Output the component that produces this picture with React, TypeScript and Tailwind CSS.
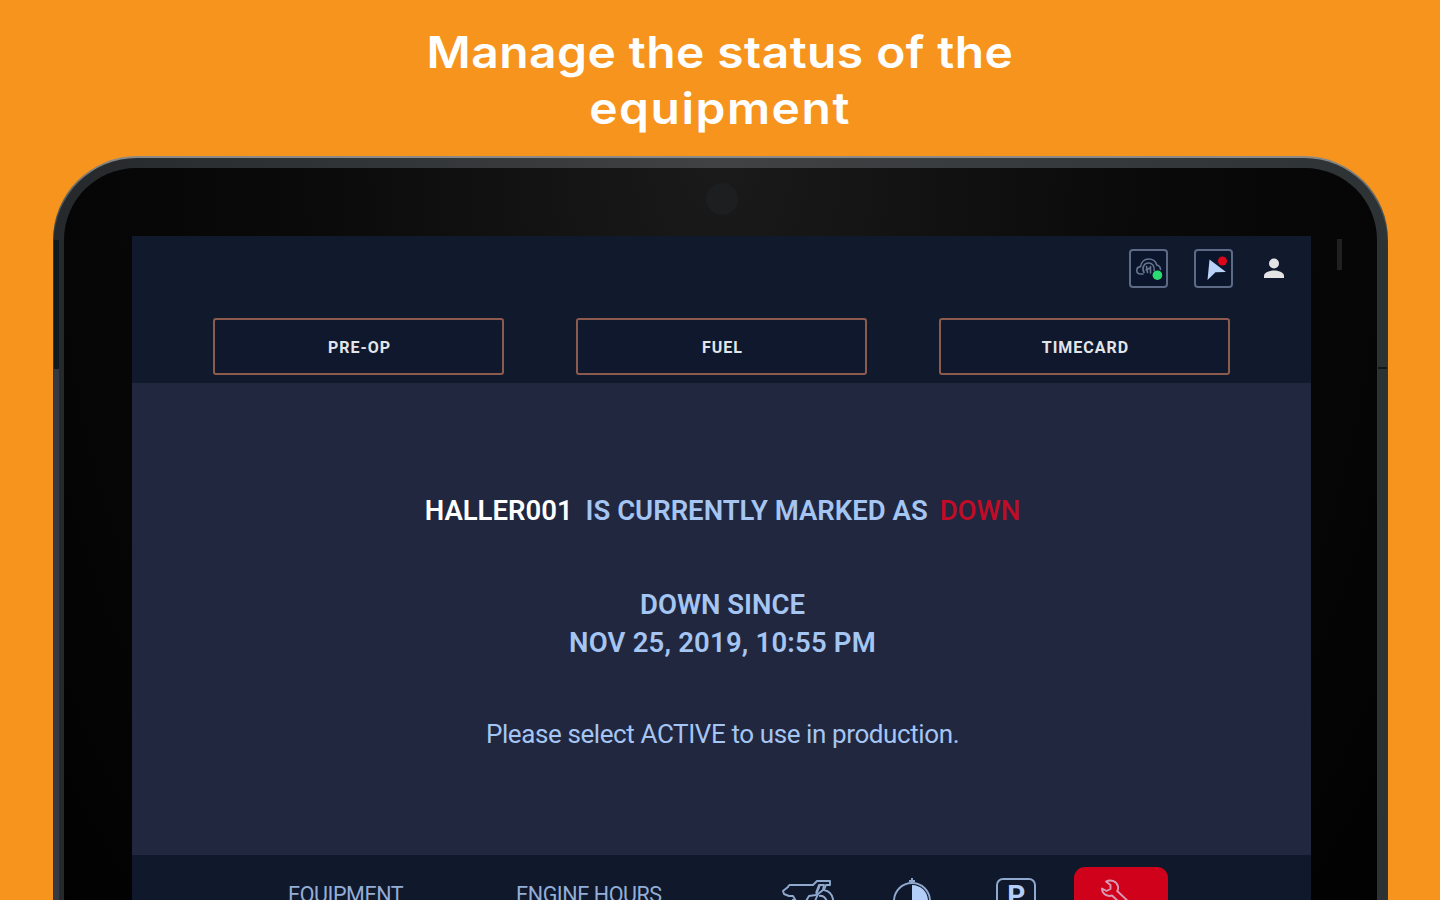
import { clsx } from "clsx";

const actions = ["PRE-OP", "FUEL", "TIMECARD"];

const CloudIcon = () => (
  <svg width="39" height="39" viewBox="0 0 39 39" fill="none" className="shrink-0">
    <g stroke="#66758f" strokeWidth="1.600" strokeLinecap="round" strokeLinejoin="round">
      <path d="M14 25h-2c-2.600 0-4.200-1.500-4.200-3.600 0-2.100 1.500-3.600 3.700-3.800C12.300 13 15.500 10 19.500 10c4 0 7.300 2.200 8.200 6 2.300.6 3.800 2.300 3.800 4.500" />
      <path d="M15 23.500c-2.800-5 .5-9.500 4.500-9.500 3.800 0 6.300 3.200 5.600 7.500" />
      <path d="M17.500 17.500l1 6M21.500 17.500v6.500M17 21l4-2" />
    </g>
    <circle cx="28.400" cy="26.200" r="4.800" fill="#2bdc72" />
  </svg>
);

const LocationIcon = () => (
  <svg width="39" height="39" viewBox="0 0 39 39" className="shrink-0">
    <path d="M15.500 10.500 32 23l-10.500.3L13.500 31z" fill="#b9d3f8" />
    <circle cx="28.500" cy="12" r="4.500" fill="#dc061c" />
  </svg>
);

const PersonIcon = () => (
  <svg width="20" height="22" viewBox="0 0 20 22" fill="#e4e4e6">
    <circle cx="10" cy="6.500" r="5" />
    <path d="M0 21v-2.300c0-3.500 6.200-5.200 10-5.200s10 1.700 10 5.200V21z" />
  </svg>
);

const ExcavatorIcon = () => (
  <svg width="54" height="40" viewBox="0 0 54 40" fill="none" stroke="#8fa9cf" strokeWidth="1.900" strokeLinejoin="round">
    <path d="M8 6h24l4-4h13v4h-4l-2 5c5 1 8 4 9 9v14" />
    <path d="M8 6 7 8l-5 4 1 3 5 2h4l3 5h10l3-5 7-1 4-10" />
    <path d="M35 14l3-8h5l-1 5-5 4-3 7M38 17c4-1 6 1 8 5M12 20v10h30" />
  </svg>
);

const TimerIcon = () => (
  <svg width="40" height="42" viewBox="0 0 40 42" fill="none" stroke="#8fa9cf" strokeWidth="1.900">
    <circle cx="20" cy="23" r="18" />
    <path d="M20 0v6M17 3h6" />
    <path d="M20 7c9 0 16 7 16 16H20z" fill="#b3cff8" stroke="none" />
  </svg>
);

const WrenchIcon = () => (
  <svg width="40" height="40" viewBox="0 0 40 40" fill="none" stroke="#d79bb5" strokeWidth="1.900" strokeLinejoin="round">
    <path d="M8 2.500c5-2.500 11 0 12 5 .3 2 0 3.500-.8 4.500L34 26c3 3-1 8-4.500 5L14 16.500c-4.500 1.500-10-1.500-10-7l4.500 2.500 4-2V6z" />
  </svg>
);

const IconBox = ({ children, className }: { children: React.ReactNode; className?: string }) => (
  <div className={clsx("flex size-[39px] items-center justify-center rounded-[4px] border-2 border-[#5c6a86] bg-[#0b152b]", className)}>
    {children}
  </div>
);

const Header = () => (
  <header className="h-[147px] bg-[#11192d]">
    <div className="flex justify-end pt-[13px] pr-[27px]">
      <IconBox>
        <CloudIcon />
      </IconBox>
      <IconBox className="ml-[26px]">
        <LocationIcon />
      </IconBox>
      <div className="ml-[31px] pt-2">
        <PersonIcon />
      </div>
    </div>
    <nav className="mt-[30px] flex justify-center gap-[72px]">
      {actions.map((label) => (
        <button
          key={label}
          className="h-[57px] w-[291px] rounded-[3px] border-2 border-[#8d5b4e] bg-[#10182d] pt-[2px] pl-[2px] text-[16px] font-bold tracking-[1px] text-[#e2e5ea]"
        >
          {label}
        </button>
      ))}
    </nav>
  </header>
);

const Status = () => (
  <main className="flex h-[472px] flex-col items-center bg-[#20273f] pt-[109px] pl-[2px] text-[27.5px] leading-[38px] font-semibold whitespace-nowrap text-[#a5c5f3]">
    <p className="flex">
      <span className="text-white">HALLER001</span>
      <span className="ml-[13px]">IS CURRENTLY MARKED AS</span>
      <span className="ml-3 font-medium text-[#c10b27]">DOWN</span>
    </p>
    <p className="mt-[56px] text-center">
      DOWN SINCE
      <br />
      <span className="tracking-[0.2px]">NOV 25, 2019, 10:55 PM</span>
    </p>
    <p className="mt-[53px] text-[26px] font-normal tracking-[-0.4px]">Please select ACTIVE to use in production.</p>
  </main>
);

const Footer = () => (
  <footer className="flex h-[120px] bg-[#10182b] pl-[156px] text-[21.5px] leading-[26px] tracking-[-0.45px] whitespace-nowrap text-[#93aed6]">
    <span className="w-[228px] pt-[27px]">EQUIPMENT</span>
    <span className="w-[265px] pt-[27px]">ENGINE HOURS</span>
    <div className="w-[111px] pt-6">
      <ExcavatorIcon />
    </div>
    <div className="w-[104px] pt-[23px]">
      <TimerIcon />
    </div>
    <div className="mt-[23px] flex h-[40px] w-[40px] items-start justify-center rounded-[7px] border-2 border-[#8fa9cf] pt-[2px] text-[28px] leading-7 font-bold text-[#b3cff8]">
      P
    </div>
    <div className="mt-3 ml-[38px] h-[94px] w-[94px] rounded-[11px] bg-[#d0021b] pt-3 pl-6">
      <WrenchIcon />
    </div>
  </footer>
);

export default function App() {
  return (
    <div className="h-[900px] w-[1440px] overflow-hidden bg-[#f7941d] font-[Roboto,sans-serif]">
      <h1 className="h-[156px] origin-center scale-x-[1.09] pt-[24px] text-center font-[Inter,sans-serif] text-[44px] leading-[56px] font-semibold tracking-[0.4px] text-white">
        Manage the status of the
        <br />
        <span className="tracking-[1.4px]">equipment</span>
      </h1>
      <div className="ml-[53px] h-[900px] w-[1335px] overflow-hidden rounded-t-[84px] bg-linear-to-b from-[#8d8b86] to-[#2c383c] to-[90px] px-px pt-[2px]">
        <div className="relative h-full rounded-t-[83px] bg-linear-to-r from-[#25292b] via-[#404243] to-[#2d3235] px-[10px] pt-[10px]">
          {/* seams on the side rails */}
          <div className="absolute top-[82px] left-0 h-[129px] w-[5px] bg-[#0a1a1d]" />
          <div className="absolute top-[211px] left-0 h-[600px] w-[5px] bg-[#343a40]" />
          <div className="absolute top-[209px] right-0 h-[2px] w-[9px] bg-[#14181a]" />
          <div className="relative h-full rounded-t-[72px] bg-black bg-radial-[ellipse_at_top] from-[#1a1a1a] via-[#0a0a0a] via-45% to-black to-100% pt-[68px] pl-[68px]">
            <div className="absolute top-[15px] left-[642px] size-8 rounded-full bg-[#1c1e20]" />
            <div className="absolute top-[71px] right-[35px] h-[31px] w-[5px] bg-[#202020]" />
            <div className="w-[1179px]">
              <Header />
              <Status />
              <Footer />
            </div>
          </div>
        </div>
      </div>
    </div>
  );
}
